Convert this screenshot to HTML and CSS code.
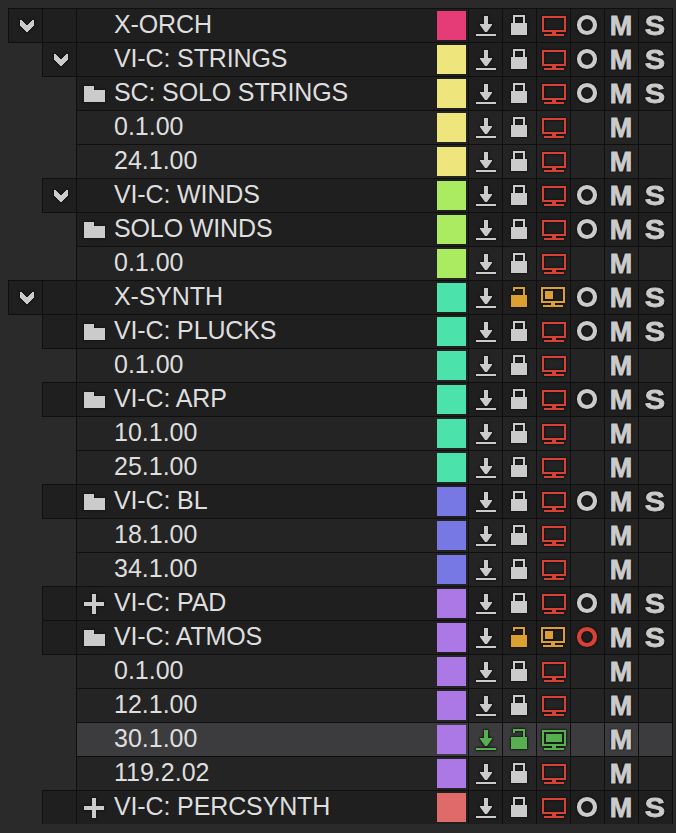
FILE: index.html
```html
<!DOCTYPE html>
<html lang="en">
<head>
<meta charset="utf-8">
<title>Tracks</title>
<link rel="stylesheet" href="styles.css">
</head>
<body>
<svg class="defs" width="0" height="0">
  <symbol id="chevron" viewBox="0 0 33 33"><path d="M11 11h2v1h1v1h1v1h1v1h1v1h2v-1h1v-1h1v-1h1v-1h1v-1h2v6h-1v1h-1v1h-1v1h-1v1h-1v1h-1v1h-2v-1h-1v-1h-1v-1h-1v-1h-1v-1h-1v-1h-1z"/></symbol>
  <symbol id="folder" viewBox="0 0 33 33"><path d="M7 9h10v4h11v12H7z"/></symbol>
  <symbol id="plus" viewBox="0 0 33 33"><path d="M15 7h4v8h8v4h-8v8h-4v-8H7v-4h8z"/></symbol>
  <symbol id="download" viewBox="0 0 33 33"><path d="M15 7h4v8h4v1l-5 7h-2l-5-7v-1h4zM7 25h20v2H7z"/></symbol>
  <symbol id="lock" viewBox="0 0 33 33"><path d="M8 14h2V6h12v8h2v12H8zM12 8v6h8V8z" fill-rule="evenodd"/></symbol>
  <symbol id="unlock" viewBox="0 0 33 33"><path d="M8 14h12V8h-8v2h-2V6h12v8h2v12H8z"/></symbol>
  <symbol id="screen" viewBox="0 0 33 33"><path d="M5 7h24v16h-10v2h8v2H7v-2h8v-2H5zM7 9v12h20V9z" fill-rule="evenodd"/></symbol>
  <symbol id="partial" viewBox="0 0 33 33"><path d="M4 6h24v16h-10v2h8v2H6v-2h8v-2H4zM6 8v12h20V8zM8 10h8v8H8z" fill-rule="evenodd"/></symbol>
  <symbol id="full" viewBox="0 0 33 33"><path d="M5 7h24v16h-10v2h8v2H7v-2h8v-2H5zM7 9v12h20V9zM9 11h16v8H9z" fill-rule="evenodd"/></symbol>
  <symbol id="ring" viewBox="0 0 33 33"><circle cx="16" cy="16" r="8" fill="none" stroke="currentColor" stroke-width="4.2"/></symbol>
</svg>
<main class="tracks" id="tracks"></main>
<script src="tracks.js"></script>
</body>
</html>
```
FILE: styles.css
```css
body {
  margin: 0;
  background: #2a2a2a;
  color: #dedede;
  font-family: "Liberation Sans", Arial, sans-serif;
}
.defs { display: block; height: 0; }
.tracks { padding: 8px 3px 0 8px; }
.row {
  display: flex;
  height: 34px;
}
.cell {
  flex: none;
  box-sizing: border-box;
  width: 35px;
  height: 35px;
  margin-right: -1px;
  border: 1px solid #0f0f0f;
  background: #242424;
}
.group .cell { background: #1f1f1f; }
.selected .cell { background: #3c3c3e; }
.indent-1 { padding-left: 34px; }
.indent-2 { padding-left: 68px; }
.name {
  display: flex;
  width: 393px;
  padding-right: 2px;
}
.label {
  flex: 1;
  margin-left: 4px;
  font-size: 25px;
  line-height: 31px;
  white-space: pre;
}
.group .label { letter-spacing: -0.13px; }
.swatch {
  width: 29px;
  height: 29px;
  margin-top: 2px;
}
.icon {
  display: block;
  flex: none;
  width: 33px;
  height: 33px;
  fill: currentColor;
  color: #cbcbcb;
  filter: drop-shadow(0 0 1px #131313) drop-shadow(0 0 1px #131313);
}
.amber { color: #dca030; }
.red { color: #d84236; }
.green { color: #57b04e; }
.letter {
  color: #cbcbcb;
  font-size: 27px;
  font-weight: bold;
  line-height: 34px;
  text-align: center;
  text-shadow: 0 0 2px #111, 1px 1px 1px #111, -1px -1px 1px #111;
  -webkit-text-stroke: 0.8px #cbcbcb;
}
.letter span {
  display: block;
  width: 32px;
}
.letter.wide span { transform: scaleX(1.13); }
.rose { background: #e53b77; }
.yellow { background: #efe57d; }
.lime { background: #abeb62; }
.teal { background: #4be3ab; }
.blue { background: #7778e3; }
.purple { background: #ac78e5; }
.coral { background: #e06969; }
```
FILE: tracks.js
```js
// indent, marker, name, colour, state
const tracks = [
  [0, "open", "X-ORCH", "rose"],
  [1, "open", "VI-C: STRINGS", "yellow"],
  [2, "folder", "SC: SOLO STRINGS", "yellow"],
  [2, "", "0.1.00", "yellow"],
  [2, "", "24.1.00", "yellow"],
  [1, "open", "VI-C: WINDS", "lime"],
  [2, "folder", "SOLO WINDS", "lime"],
  [2, "", "0.1.00", "lime"],
  [0, "open", "X-SYNTH", "teal", "partial"],
  [1, "folder", "VI-C: PLUCKS", "teal"],
  [2, "", "0.1.00", "teal"],
  [1, "folder", "VI-C: ARP", "teal"],
  [2, "", "10.1.00", "teal"],
  [2, "", "25.1.00", "teal"],
  [1, "folder", "VI-C: BL", "blue"],
  [2, "", "18.1.00", "blue"],
  [2, "", "34.1.00", "blue"],
  [1, "plus", "VI-C: PAD", "purple"],
  [1, "folder", "VI-C: ATMOS", "purple", "armed"],
  [2, "", "0.1.00", "purple"],
  [2, "", "12.1.00", "purple"],
  [2, "", "30.1.00", "purple", "selected"],
  [2, "", "119.2.02", "purple"],
  [1, "plus", "VI-C: PERCSYNTH", "coral"],
];

const icon = (id, tone = "") => `<svg class="icon ${tone}"><use href="#${id}"/></svg>`;
const blank = '<svg class="icon"></svg>';
const cell = (content, extra = "") => `<div class="cell ${extra}">${content}</div>`;
const letter = (text, extra = "") => cell(`<span>${text}</span>`, `letter ${extra}`);

document.getElementById("tracks").innerHTML = tracks.map(([indent, marker, name, colour, state]) => {
  const group = marker !== "";
  const unlocked = state === "partial" || state === "armed";
  const selected = state === "selected";
  let html = "";
  for (let level = indent; level < 2; level++) {
    html += cell(marker === "open" && level === indent ? icon("chevron") : "");
  }
  const mark = group && marker !== "open" ? icon(marker) : blank;
  html += cell(`${mark}<span class="label">${name}</span><span class="swatch ${colour}"></span>`, "name");
  html += cell(icon("download", selected ? "green" : ""));
  html += cell(selected ? icon("unlock", "green") : unlocked ? icon("unlock", "amber") : icon("lock"));
  html += cell(selected ? icon("full", "green") : unlocked ? icon("partial", "amber") : icon("screen", "red"));
  html += cell(group ? icon("ring", state === "armed" ? "red" : "") : "");
  html += letter("M") + (group ? letter("S", "wide") : cell(""));
  return `<div class="row indent-${indent} ${group ? "group" : ""} ${selected ? "selected" : ""}">${html}</div>`;
}).join("");
```
